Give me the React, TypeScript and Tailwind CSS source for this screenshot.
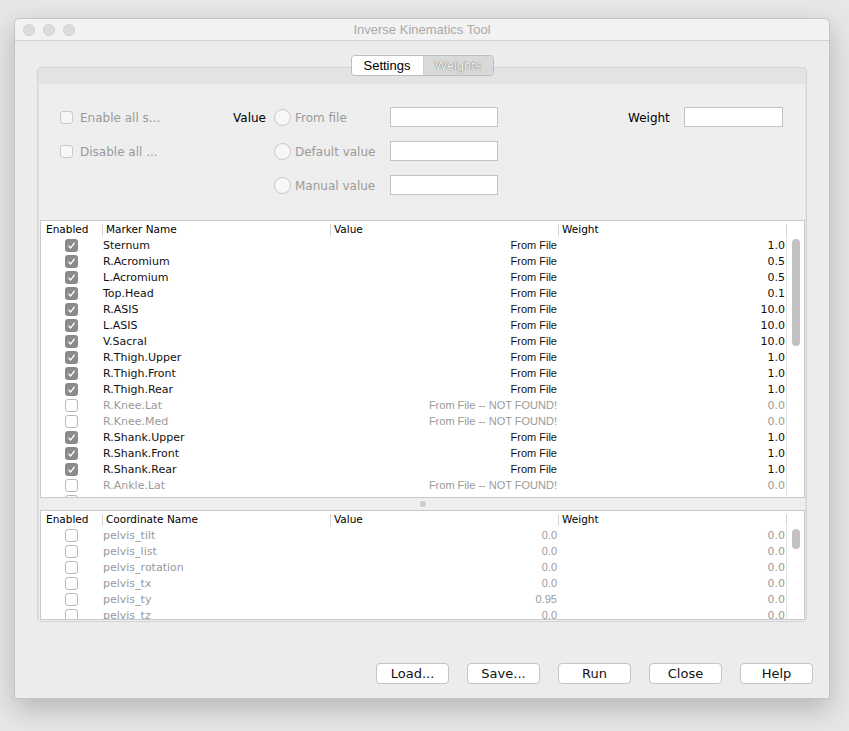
import React from "react";

type Marker = { name: string; on: boolean; weight: string };

const markers: Marker[] = [
  { name: "Sternum", on: true, weight: "1.0" },
  { name: "R.Acromium", on: true, weight: "0.5" },
  { name: "L.Acromium", on: true, weight: "0.5" },
  { name: "Top.Head", on: true, weight: "0.1" },
  { name: "R.ASIS", on: true, weight: "10.0" },
  { name: "L.ASIS", on: true, weight: "10.0" },
  { name: "V.Sacral", on: true, weight: "10.0" },
  { name: "R.Thigh.Upper", on: true, weight: "1.0" },
  { name: "R.Thigh.Front", on: true, weight: "1.0" },
  { name: "R.Thigh.Rear", on: true, weight: "1.0" },
  { name: "R.Knee.Lat", on: false, weight: "0.0" },
  { name: "R.Knee.Med", on: false, weight: "0.0" },
  { name: "R.Shank.Upper", on: true, weight: "1.0" },
  { name: "R.Shank.Front", on: true, weight: "1.0" },
  { name: "R.Shank.Rear", on: true, weight: "1.0" },
  { name: "R.Ankle.Lat", on: false, weight: "0.0" },
  { name: "R.Ankle.Med", on: false, weight: "0.0" },
];

const coords = [
  { name: "pelvis_tilt", value: "0.0" },
  { name: "pelvis_list", value: "0.0" },
  { name: "pelvis_rotation", value: "0.0" },
  { name: "pelvis_tx", value: "0.0" },
  { name: "pelvis_ty", value: "0.95" },
  { name: "pelvis_tz", value: "0.0" },
];

function Check({ on }: { on: boolean }) {
  if (!on) {
    return <div className="w-[13px] h-[13px] rounded-[3px] border border-[#b9b9b9] bg-white" />;
  }
  return (
    <div className="w-[13px] h-[13px] rounded-[3px] bg-[#8b8b8b] flex items-center justify-center">
      <svg width="9" height="9" viewBox="0 0 9 9">
        <path d="M1.5 4.8 L3.6 7 L7.6 1.6" fill="none" stroke="#ffffff" strokeWidth="1.3" />
      </svg>
    </div>
  );
}

function Header({ second }: { second: string }) {
  const sep = "w-px h-[12px] bg-[#d4d4d4]";
  return (
    <div className="flex h-[16px] pt-[1px] items-center text-[10.5px] text-black [font-family:'DejaVu_Sans',sans-serif]">
      <div className="w-[61px] pl-[5px]">Enabled</div>
      <div className="w-[228px] flex items-center">
        <div className={sep} />
        <span className="pl-[3px]">{second}</span>
      </div>
      <div className="w-[228px] flex items-center">
        <div className={sep} />
        <span className="pl-[3px]">Value</span>
      </div>
      <div className="w-[228px] flex items-center">
        <div className={sep} />
        <span className="pl-[3px]">Weight</span>
      </div>
      <div className="w-[18px] flex items-center">
        <div className={sep} />
      </div>
    </div>
  );
}

function Scrollbar({ top, height }: { top: number; height: string }) {
  return (
    <div className="w-[18px] border-l border-[#e4e4e4] flex flex-col items-center">
      <div style={{ height: top }} />
      <div className={`w-[8px] rounded-full bg-[#c2c2c2] ${height}`} />
    </div>
  );
}

function Btn({ label }: { label: string }) {
  return (
    <button className="w-[73px] h-[21px] rounded-[4px] border border-[#c4c4c4] bg-white text-[13px] text-[#111] leading-none [font-family:'DejaVu_Sans',sans-serif]">
      {label}
    </button>
  );
}

function Field({ w }: { w: string }) {
  return <div className={`${w} h-[20px] bg-white border border-[#c3c3c3]`} />;
}

function Radio() {
  return <div className="w-[17px] h-[17px] rounded-full border border-[#c6c6c6] bg-[#f7f7f7]" />;
}

function DisabledBox() {
  return <div className="w-[13px] h-[13px] rounded-[3px] border border-[#c9c9c9] bg-[#f7f7f7]" />;
}

export default function App() {
  return (
    <div className="w-[849px] h-[731px] bg-[#e7e7e7] pt-[18px] pl-[14px] overflow-hidden">
      <div className="w-[816px] h-[681px] border border-[#c4c4c4] rounded-t-[5px] bg-[#ececec] shadow-[0_10px_28px_rgba(0,0,0,0.22)] flex flex-col">
        {/* title bar */}
        <div className="h-[22px] border-b border-[#d2d2d2] bg-[#f2f2f2] rounded-t-[5px] flex items-center px-[8px]">
          <div className="flex gap-[8px]">
            <div className="w-[12px] h-[12px] rounded-full bg-[#dcdcdc] border border-[#d0d0d0]" />
            <div className="w-[12px] h-[12px] rounded-full bg-[#dcdcdc] border border-[#d0d0d0]" />
            <div className="w-[12px] h-[12px] rounded-full bg-[#dcdcdc] border border-[#d0d0d0]" />
          </div>
          <div className="flex-1 text-center text-[13px] text-[#a9a9a9] pr-[52px] [font-family:'Liberation_Sans',sans-serif]">
            Inverse Kinematics Tool
          </div>
        </div>

        {/* body */}
        <div className="flex flex-col pt-[14px]">
          <div className="flex justify-center relative z-10">
            <div className="flex h-[21px] rounded-[4px] border border-[#bdbdbd] overflow-hidden text-[13px] [font-family:'Liberation_Sans',sans-serif]">
              <div className="w-[72px] bg-white text-black flex items-center justify-center border-r border-[#cfcfcf]">Settings</div>
              <div className="w-[69px] bg-[#d9d9d9] text-[#f3f3f3] flex items-center justify-center [text-shadow:0_0_1px_#7a7a7a,0_0_1px_#7a7a7a]">
                Weights
              </div>
            </div>
          </div>

          <div className="ml-[22px] -mt-[9px] w-[770px] h-[555px] border border-[#d3d3d3] rounded-[4px] bg-[#e3e3e3] pt-[16px] px-[1px]">
            <div className="h-[537px] bg-[#eeeeee] flex flex-col pt-[23px]">
              {/* settings form */}
              <div className="pl-[21px] grid grid-cols-[173px_41px_21px_95px_108px_130px_56px_99px] grid-rows-[20px_20px_20px] gap-y-[14px] items-center text-[12px] [font-family:'DejaVu_Sans',sans-serif]">
                <div className="flex items-center gap-[7px] text-[#9a9a9a]">
                  <DisabledBox />
                  <span className="pt-[1px]">Enable all s...</span>
                </div>
                <div className="text-black pt-[1px]">Value</div>
                <Radio />
                <div className="text-[#9a9a9a] pt-[1px]">From file</div>
                <Field w="w-[108px]" />
                <div />
                <div className="text-black pt-[1px]">Weight</div>
                <Field w="w-[99px]" />

                <div className="flex items-center gap-[7px] text-[#9a9a9a]">
                  <DisabledBox />
                  <span className="pt-[1px]">Disable all ...</span>
                </div>
                <div />
                <Radio />
                <div className="text-[#9a9a9a] pt-[1px]">Default value</div>
                <Field w="w-[108px]" />
                <div />
                <div />
                <div />

                <div />
                <div />
                <Radio />
                <div className="text-[#9a9a9a] pt-[1px]">Manual value</div>
                <Field w="w-[108px]" />
                <div />
                <div />
                <div />
              </div>

              {/* marker table */}
              <div className="mt-[25px] ml-[1px] w-[765px] border border-[#c9c9c9] bg-white">
                <Header second="Marker Name" />
                <div className="flex h-[260px] overflow-hidden">
                  <div className="w-[745px]">
                    {markers.map((m) => (
                      <div key={m.name} className="flex h-[16px] items-center">
                        <div className="w-[61px] flex justify-center">
                          <Check on={m.on} />
                        </div>
                        <div className={`w-[228px] pl-[1px] pt-[2px] text-[11px] [font-family:'DejaVu_Sans',sans-serif] ${m.on ? "text-[#111]" : "text-[#9a9a9a]"}`}>
                          {m.name}
                        </div>
                        <div className={`w-[228px] pr-[1px] text-right text-[11px] [font-family:'Liberation_Sans',sans-serif] ${m.on ? "text-[#111]" : "text-[#9a9a9a]"}`}>
                          {m.on ? "From File" : "From File -- NOT FOUND!"}
                        </div>
                        <div className={`w-[228px] pr-[1px] pt-[2px] text-right text-[11px] [font-family:'DejaVu_Sans',sans-serif] ${m.on ? "text-[#111]" : "text-[#9a9a9a]"}`}>
                          {m.weight}
                        </div>
                      </div>
                    ))}
                  </div>
                  <Scrollbar top={2} height="h-[107px]" />
                </div>
              </div>

              {/* splitter */}
              <div className="h-[12px] ml-[1px] w-[765px] flex items-center justify-center">
                <div className="w-[6px] h-[6px] rounded-full bg-[#cdcdcd]" />
              </div>

              {/* coordinate table */}
              <div className="ml-[1px] w-[765px] border border-[#c9c9c9] bg-white">
                <Header second="Coordinate Name" />
                <div className="flex h-[92px] overflow-hidden">
                  <div className="w-[745px]">
                    {coords.map((c) => (
                      <div key={c.name} className="flex h-[16px] items-center text-[#9a9a9a]">
                        <div className="w-[61px] flex justify-center">
                          <Check on={false} />
                        </div>
                        <div className="w-[228px] pl-[1px] pt-[2px] text-[11px] [font-family:'DejaVu_Sans',sans-serif]">{c.name}</div>
                        <div className="w-[228px] pr-[1px] text-right text-[11px] [font-family:'Liberation_Sans',sans-serif]">{c.value}</div>
                        <div className="w-[228px] pr-[1px] pt-[2px] text-right text-[11px] [font-family:'DejaVu_Sans',sans-serif]">0.0</div>
                      </div>
                    ))}
                  </div>
                  <Scrollbar top={2} height="h-[20px]" />
                </div>
              </div>
            </div>
          </div>

          {/* buttons */}
          <div className="flex justify-end gap-[18px] pr-[16px] mt-[41px]">
            <Btn label="Load..." />
            <Btn label="Save..." />
            <Btn label="Run" />
            <Btn label="Close" />
            <Btn label="Help" />
          </div>
        </div>
      </div>
    </div>
  );
}
